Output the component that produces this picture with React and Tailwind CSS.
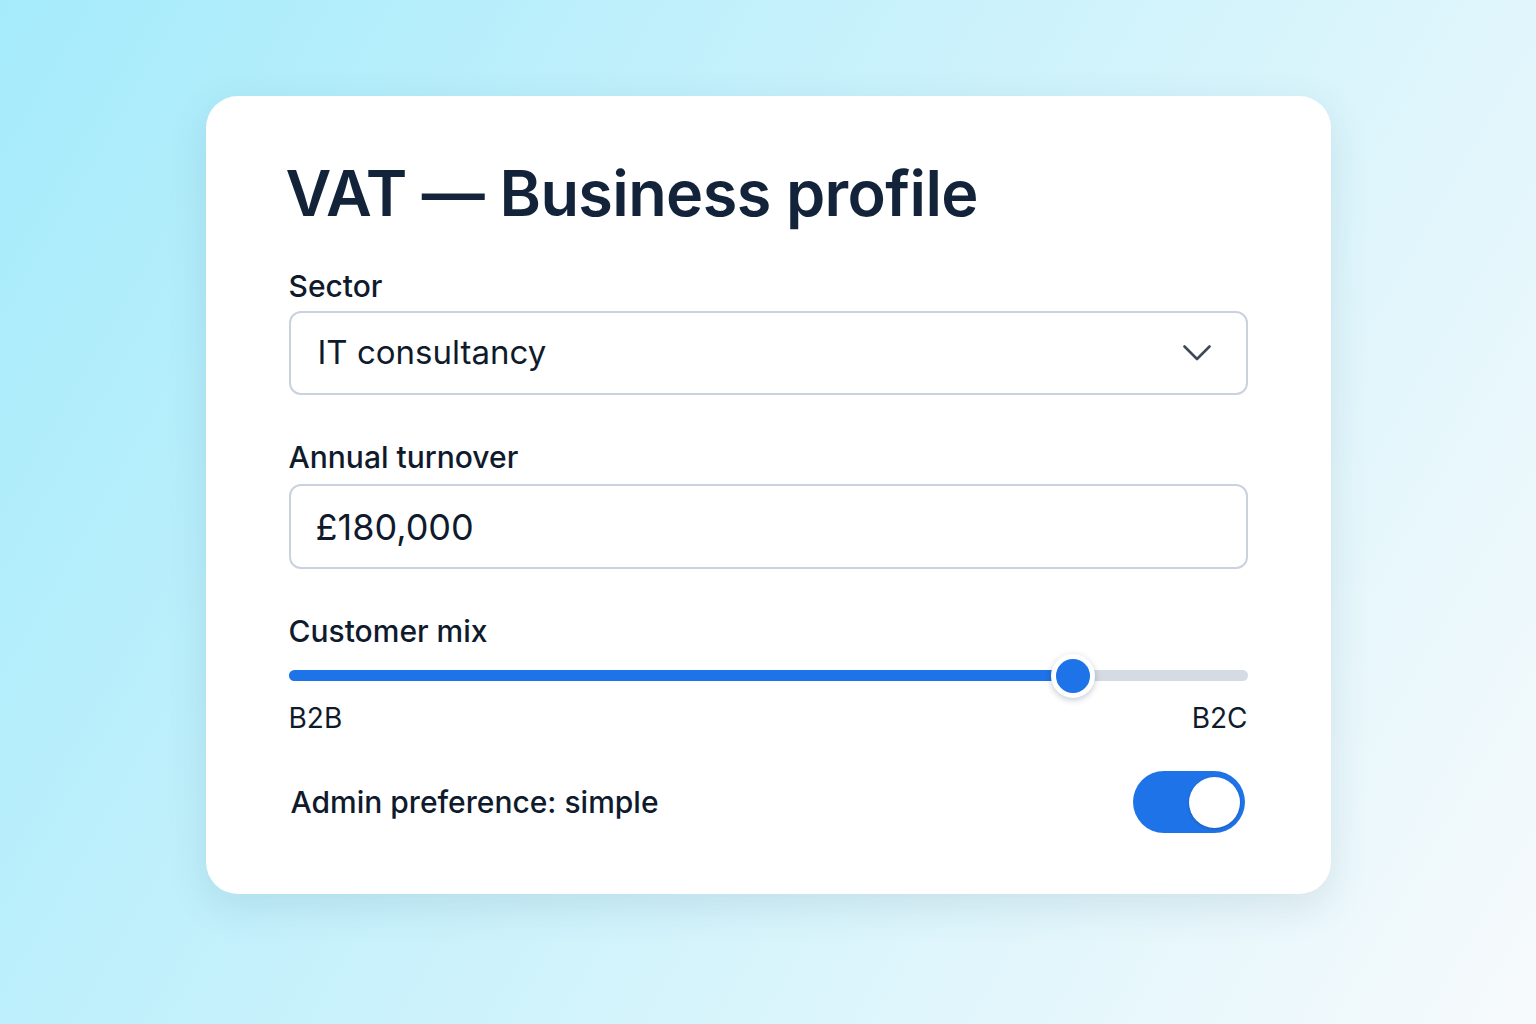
import React from 'react';

const Label = ({ children, className = '' }) => (
  <div className={`text-[30px] leading-none font-medium text-[#0f1b2d] ${className}`}>{children}</div>
);

const ChevronDown = () => (
  <svg width="28" height="16" viewBox="0 0 28 16" fill="none">
    <path d="M1.5 1.5 L14 14 L26.5 1.5" stroke="#3e4858" strokeWidth="2.6" strokeLinecap="round" strokeLinejoin="round" />
  </svg>
);

export default function App() {
  const mix = 81.8;

  return (
    <div
      className="min-h-screen w-full flex justify-center pt-[96px] bg-linear-[120deg] from-[#a5ebfb] to-[#f7fafc]"
      style={{ fontFamily: 'Inter, "Noto Sans", sans-serif' }}
    >
      <div className="w-[1125px] h-[798px] bg-white rounded-[32px] shadow-[0_12px_40px_rgba(30,80,110,0.12)] px-[83px] pt-[66px] flex flex-col">
        <h1 className="-ml-[3px] text-[63px] leading-none font-semibold tracking-[-0.01em] text-[#13233a]">
          VAT — Business profile
        </h1>

        {/* Sector */}
        <Label className="mt-[46px]">Sector</Label>
        <div className="mt-[10px] h-[84px] rounded-[12px] border-2 border-[#c9d2dd] flex items-center justify-between pl-[27px] pr-[35px]">
          <span className="text-[33px] text-[#0f1b2d]">IT consultancy</span>
          <ChevronDown />
        </div>

        {/* Turnover */}
        <Label className="mt-[47px]">Annual turnover</Label>
        <div className="mt-[12px] h-[85px] rounded-[12px] border-2 border-[#c9d2dd] flex items-center pl-[25px]">
          <span className="text-[36px] text-[#0f1b2d]">£180,000</span>
        </div>

        {/* Customer mix slider */}
        <Label className="mt-[47px]">Customer mix</Label>
        <div className="mt-[24px] relative h-[11px] rounded-full bg-[#d5dbe3]">
          <div className="h-full rounded-full bg-[#1e73e8] w-[82%]" />
          <div
            className="absolute top-1/2 w-[44px] h-[44px] -translate-x-1/2 -translate-y-1/2 rounded-full bg-[#1e73e8] border-[5px] border-white shadow-[0_2px_6px_rgba(15,40,80,0.25)]"
            style={{ left: `${mix}%` }}
          />
        </div>
        <div className="mt-[23px] flex justify-between text-[28px] leading-none text-[#0f1b2d]">
          <span>B2B</span>
          <span>B2C</span>
        </div>

        {/* Admin toggle */}
        <div className="mt-[39px] flex items-center justify-between">
          <span className="pl-[2px] text-[30px] leading-none font-medium text-[#0f1b2d]">Admin preference: simple</span>
          <div className="w-[112px] h-[62px] rounded-full bg-[#1e73e8] flex items-center justify-end pr-[5px] mr-[3px]">
            <div className="w-[51px] h-[51px] rounded-full bg-white shadow-[0_1px_3px_rgba(0,0,0,0.2)]" />
          </div>
        </div>
      </div>
    </div>
  );
}
